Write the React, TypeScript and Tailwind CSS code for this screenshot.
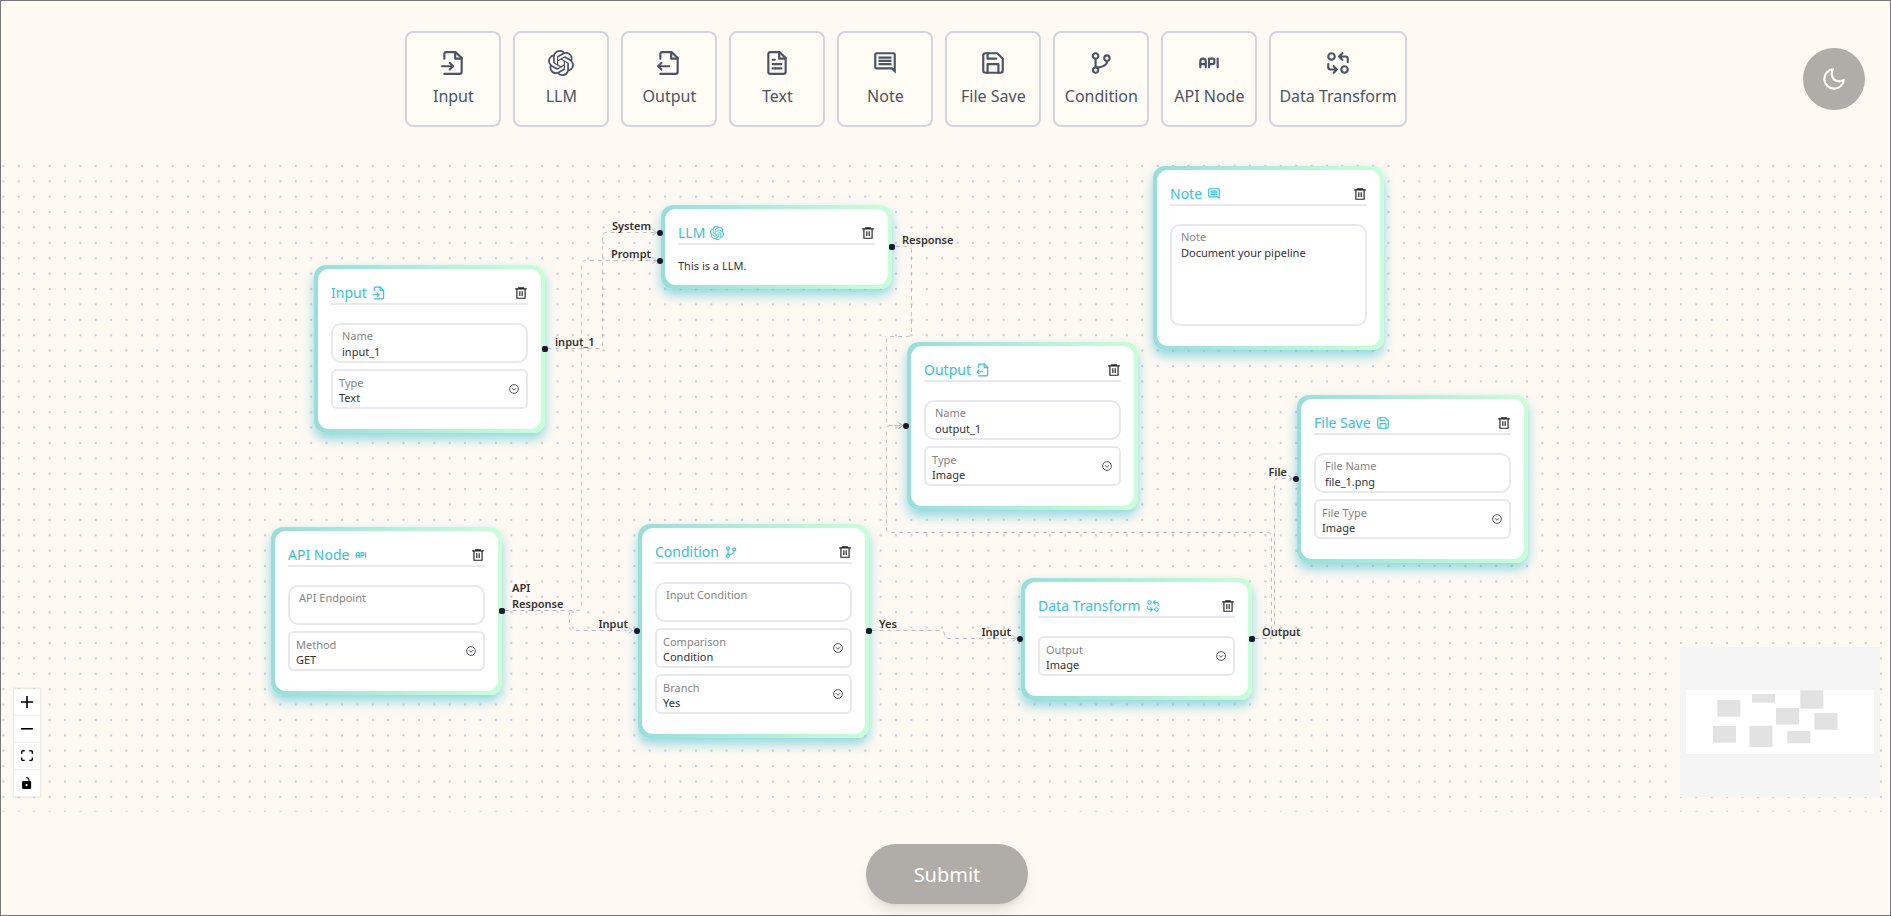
import { useId, type CSSProperties, type ReactNode } from 'react';
import { SiOpenai } from 'react-icons/si';
import { MdOutlineComment } from 'react-icons/md';
import { TbApi, TbTransform } from 'react-icons/tb';
import { BiGitBranch } from 'react-icons/bi';

type IconProps = { className?: string };

function Stroke({ className, children }: { className?: string; children: ReactNode }) {
  return (
    <svg
      viewBox="0 0 24 24"
      className={className}
      fill="none"
      stroke="currentColor"
      strokeWidth="2"
      strokeLinecap="round"
      strokeLinejoin="round"
      aria-hidden="true"
    >
      {children}
    </svg>
  );
}

const FileInputIcon = ({ className }: IconProps) => (
  <Stroke className={className}>
    <path d="M4 22h14a2 2 0 0 0 2-2V7.5L14.5 2H6a2 2 0 0 0-2 2v4" />
    <path d="M14 2v6h6" />
    <path d="M2 15h10" />
    <path d="m9 18 3-3-3-3" />
  </Stroke>
);

const FileOutputIcon = ({ className }: IconProps) => (
  <Stroke className={className}>
    <path d="M4 22h14a2 2 0 0 0 2-2V7.5L14.5 2H6a2 2 0 0 0-2 2v4" />
    <path d="M14 2v6h6" />
    <path d="M2 15h10" />
    <path d="m5 12-3 3 3 3" />
  </Stroke>
);

const FileTextIcon = ({ className }: IconProps) => (
  <Stroke className={className}>
    <path d="M14.5 2H6a2 2 0 0 0-2 2v16a2 2 0 0 0 2 2h12a2 2 0 0 0 2-2V7.5L14.5 2z" />
    <path d="M14 2v6h6" />
    <path d="M16 13H8M16 17H8M10 9H8" />
  </Stroke>
);

const SaveIcon = ({ className }: IconProps) => (
  <Stroke className={className}>
    <path d="M19 21H5a2 2 0 0 1-2-2V5a2 2 0 0 1 2-2h11l5 5v11a2 2 0 0 1-2 2z" />
    <path d="M17 21v-8H7v8" />
    <path d="M7 3v5h8" />
  </Stroke>
);

const TrashIcon = ({ className }: IconProps) => (
  <svg viewBox="0 0 24 24" className={className} fill="currentColor" aria-hidden="true">
    <path d="M17 4h5v2h-2v15a1 1 0 0 1-1 1H5a1 1 0 0 1-1-1V6H2V4h5V2h10v2zM6 6v14h12V6H6zm3 3h2v8H9V9zm4 0h2v8h-2V9z" />
  </svg>
);

const ChevronCircleIcon = ({ className }: IconProps) => (
  <svg viewBox="0 0 24 24" className={className} fill="none" stroke="currentColor" strokeWidth="2" aria-hidden="true">
    <circle cx="12" cy="12" r="10.5" />
    <path d="m7 10 5 5 5-5" />
  </svg>
);

const MoonIcon = ({ className }: IconProps) => (
  <Stroke className={className}>
    <path d="M21 12.8A9 9 0 1 1 11.200 3a7 7 0 0 0 9.800 9.800z" />
  </Stroke>
);

const tools = [
  { label: 'Input', Icon: FileInputIcon },
  { label: 'LLM', Icon: SiOpenai },
  { label: 'Output', Icon: FileOutputIcon },
  { label: 'Text', Icon: FileTextIcon },
  { label: 'Note', Icon: MdOutlineComment },
  { label: 'File Save', Icon: SaveIcon },
  { label: 'Condition', Icon: BiGitBranch },
  { label: 'API Node', Icon: TbApi },
  { label: 'Data Transform', Icon: TbTransform },
];

function TextField({ label, value }: { label: string; value: string }) {
  const id = useId();
  return (
    <div className="flex h-10 flex-col rounded-[10px] border-2 border-[#e8e8ee] bg-white px-[9px] pt-[3px]">
      <label htmlFor={id} className="text-[11px] leading-4 text-[#858585]">{label}</label>
      <input id={id} type="text" defaultValue={value} className="h-4 w-full bg-transparent text-[11px] leading-4 text-[#333] outline-none" />
    </div>
  );
}

function SelectField({ label, value }: { label: string; value: string }) {
  const id = useId();
  return (
    <div className="relative flex h-10 flex-col rounded-md border-2 border-[#e8e8ee] bg-white px-[6px] pt-1">
      <label htmlFor={id} className="text-[11px] leading-[15px] text-[#858585]">{label}</label>
      <select id={id} defaultValue={value} className="h-4 w-full appearance-none bg-transparent text-[11px] leading-4 text-[#333] outline-none">
        <option>{value}</option>
      </select>
      <ChevronCircleIcon className="pointer-events-none absolute top-[13px] right-[7px] size-[10px] text-[#333]" />
    </div>
  );
}

function NoteField() {
  const id = useId();
  return (
    <div className="flex h-[102px] flex-col rounded-[10px] border-2 border-[#e8e8ee] bg-white px-[9px] pt-[3px]">
      <label htmlFor={id} className="text-[11px] leading-4 text-[#858585]">Note</label>
      <textarea id={id} defaultValue="Document your pipeline" className="w-full flex-1 resize-none bg-transparent text-[11px] leading-4 text-[#333] outline-none" />
    </div>
  );
}

type Port = { side: 'in' | 'out'; y: number; label?: string };

type NodeSpec = {
  title: string;
  Icon: (props: IconProps) => ReactNode;
  x: number;
  y: number;
  ports: Port[];
  body: ReactNode;
};

const nodes: NodeSpec[] = [
  {
    title: 'Input', Icon: FileInputIcon, x: 313, y: 108,
    ports: [{ side: 'out', y: 84, label: 'input_1' }],
    body: <><TextField label="Name" value="input_1" /><SelectField label="Type" value="Text" /></>,
  },
  {
    title: 'LLM', Icon: SiOpenai, x: 660, y: 48,
    ports: [
      { side: 'in', y: 28, label: 'System' },
      { side: 'in', y: 56, label: 'Prompt' },
      { side: 'out', y: 42, label: 'Response' },
    ],
    body: <p className="-mt-[5px] -mb-[9px] text-[11px] leading-4 text-[#333]">This is a LLM.</p>,
  },
  {
    title: 'Note', Icon: MdOutlineComment, x: 1152, y: 9,
    ports: [],
    body: <NoteField />,
  },
  {
    title: 'Output', Icon: FileOutputIcon, x: 906, y: 185,
    ports: [{ side: 'in', y: 84 }],
    body: <><TextField label="Name" value="output_1" /><SelectField label="Type" value="Image" /></>,
  },
  {
    title: 'File Save', Icon: SaveIcon, x: 1296, y: 238,
    ports: [{ side: 'in', y: 84, label: 'File' }],
    body: <><TextField label="File Name" value="file_1.png" /><SelectField label="File Type" value="Image" /></>,
  },
  {
    title: 'API Node', Icon: TbApi, x: 270, y: 370,
    ports: [{ side: 'out', y: 84, label: 'API Response' }],
    body: <><TextField label="API Endpoint" value="" /><SelectField label="Method" value="GET" /></>,
  },
  {
    title: 'Condition', Icon: BiGitBranch, x: 637, y: 367,
    ports: [
      { side: 'in', y: 107, label: 'Input' },
      { side: 'out', y: 107, label: 'Yes' },
    ],
    body: (
      <>
        <TextField label="Input Condition" value="" />
        <SelectField label="Comparison" value="Condition" />
        <SelectField label="Branch" value="Yes" />
      </>
    ),
  },
  {
    title: 'Data Transform', Icon: TbTransform, x: 1020, y: 421,
    ports: [
      { side: 'in', y: 61, label: 'Input' },
      { side: 'out', y: 61, label: 'Output' },
    ],
    body: <SelectField label="Output" value="Image" />,
  },
];

function PortMark({ port }: { port: Port }) {
  const style: CSSProperties = { top: port.y };
  const isOut = port.side === 'out';
  return (
    <div
      style={style}
      className={isOut ? 'absolute left-full' : 'absolute left-0'}
    >
      <span
        className={
          isOut
            ? 'absolute -top-[3px] -left-[3px] size-[6px] rounded-[2px] bg-[#1a192b]'
            : 'absolute -top-[3px] -left-[4px] size-[6px] rounded-full bg-[#1a192b]'
        }
      />
      {port.label && (
        <span
          className={
            isOut
              ? 'absolute bottom-[-1px] left-[10px] w-[60px] text-[11px] leading-4 font-semibold text-[#333]'
              : 'absolute right-[10px] bottom-[-1px] text-right text-[11px] leading-4 font-semibold whitespace-nowrap text-[#333]'
          }
        >
          {port.label}
        </span>
      )}
    </div>
  );
}

function FlowNode({ node }: { node: NodeSpec }) {
  const { Icon } = node;
  return (
    <article
      style={{ left: node.x, top: node.y }}
      className="absolute w-[231px] rounded-xl bg-linear-to-r from-[#98ded9] to-[#c7ffd8] p-1 shadow-[0_6px_12px_rgba(30,184,206,0.5)]"
    >
      <div className="rounded-[11px] bg-white px-[13px] pt-[14px] pb-5">
        <header className="mb-[18px] flex items-center border-b-2 border-[#e8e8ee] text-[#35c4d4]">
          <h2 className="text-sm leading-5">{node.title}</h2>
          <Icon className="ml-[5px] size-[14px]" />
          <button type="button" aria-label={`Delete ${node.title}`} className="ml-auto text-[#222]">
            <TrashIcon className="size-[14px]" />
          </button>
        </header>
        <div className="flex flex-col gap-[6px]">{node.body}</div>
      </div>
      {node.ports.map((port) => (
        <PortMark key={`${port.side}${port.y}`} port={port} />
      ))}
    </article>
  );
}

type Point = [number, number];

const edges: Point[][] = [
  [[547, 192], [602, 192], [602, 76], [656, 76]],
  [[504, 454], [581, 454], [581, 104], [656, 104]],
  [[504, 454], [569, 454], [569, 474], [632, 474]],
  [[895, 90], [911, 90], [911, 180], [886, 180], [886, 269], [902, 269]],
  [[1254, 482], [1271, 482], [1271, 376], [886, 376], [886, 269], [902, 269]],
  [[1254, 482], [1274, 482], [1274, 322], [1292, 322]],
  [[871, 474], [944, 474], [944, 482], [1016, 482]],
];

const towards = (from: Point, to: Point, distance: number): Point => [
  from[0] + Math.sign(to[0] - from[0]) * distance,
  from[1] + Math.sign(to[1] - from[1]) * distance,
];

// Right-angled route whose corners are eased by a small curve.
function routePath(points: Point[]) {
  const parts = [`M${points[0].join(' ')}`];
  for (let i = 1; i < points.length - 1; i += 1) {
    const before = towards(points[i], points[i - 1], 4);
    const after = towards(points[i], points[i + 1], 4);
    parts.push(`L${before.join(' ')}Q${points[i].join(' ')} ${after.join(' ')}`);
  }
  parts.push(`L${points[points.length - 1].join(' ')}`);
  return parts.join('');
}

function Edges() {
  return (
    <svg className="absolute inset-0 size-full" aria-hidden="true">
      <defs>
        <pattern id="dots" x="-5.3" y="1.2" width="15.39" height="15.39" patternUnits="userSpaceOnUse">
          <circle cx="7.7" cy="7.7" r="1.15" fill="#cbcbd6" />
        </pattern>
      </defs>
      <rect width="100%" height="100%" fill="url(#dots)" />
      <g fill="none" stroke="#b1b1b7" transform="translate(-0.5 -0.5)">
        {edges.map((points, index) => {
          const [x, y] = points[points.length - 1];
          return (
            <g key={index}>
              <path d={routePath(points)} strokeWidth="0.8" strokeDasharray="4 4" />
              <path d={`M${x - 4} ${y - 3}L${x} ${y}L${x - 4} ${y + 3}`} strokeWidth="0.8" />
            </g>
          );
        })}
      </g>
    </svg>
  );
}

function ControlButton({ label, children }: { label: string; children: ReactNode }) {
  return (
    <button type="button" aria-label={label} className="flex h-[27px] w-[26px] items-center justify-center border-b border-[#eee] bg-white text-black">
      {children}
    </button>
  );
}

function Controls() {
  return (
    <div className="absolute bottom-[15px] left-[13px] flex flex-col shadow-[0_0_2px_1px_rgba(0,0,0,0.08)]">
      <ControlButton label="Zoom in">
        <svg viewBox="0 0 32 32" className="size-3" fill="currentColor"><path d="M32 18.133H18.133V32h-4.266V18.133H0v-4.266h13.867V0h4.266v13.867H32z" /></svg>
      </ControlButton>
      <ControlButton label="Zoom out">
        <svg viewBox="0 0 32 5" className="w-3" fill="currentColor"><path d="M0 0h32v4.2H0z" /></svg>
      </ControlButton>
      <ControlButton label="Fit view">
        <svg viewBox="0 0 32 30" className="w-3" fill="currentColor"><path d="M3.692 4.63c0-.53.4-.938.939-.938h5.215V0H4.708C2.13 0 0 2.054 0 4.63v5.216h3.692V4.631zM27.354 0h-5.2v3.692h5.17c.53 0 .984.4.984.939v5.215H32V4.631A4.624 4.624 0 0027.354 0zm.954 24.83c0 .532-.4.94-.939.94h-5.215v3.768h5.215c2.577 0 4.631-2.13 4.631-4.707v-5.139h-3.692v5.139zm-23.677.94a.919.919 0 01-.939-.94v-5.138H0v5.139c0 2.577 2.13 4.707 4.708 4.707h5.138V25.77H4.631z" /></svg>
      </ControlButton>
      <ControlButton label="Toggle interactivity">
        <svg viewBox="0 0 25 32" className="h-3" fill="currentColor"><path d="M21.333 10.667H19.81V7.619C19.81 3.429 16.38 0 12.19 0c-4.114 1.828-1.37 2.133.305 2.438 1.676.305 4.42 2.59 4.42 5.181v3.048H3.047A3.056 3.056 0 000 13.714v15.238A3.056 3.056 0 003.048 32h18.285a3.056 3.056 0 003.048-3.048V13.714a3.056 3.056 0 00-3.048-3.047zM12.19 24.533a3.056 3.056 0 01-3.047-3.047 3.056 3.056 0 013.047-3.048 3.056 3.056 0 013.048 3.048 3.056 3.056 0 01-3.048 3.047z" /></svg>
      </ControlButton>
    </div>
  );
}

function MiniMap() {
  return (
    <svg viewBox="0 0 200 150" className="absolute right-[10px] bottom-[15px] h-[150px] w-[200px]" role="img" aria-label="Mini map">
      <rect width="200" height="150" fill="#f5f5f5" />
      <rect x="6" y="43" width="188" height="64" fill="#fff" />
      <g fill="#e2e2e2">
        <rect x="37.3" y="53" width="23" height="16.7" />
        <rect x="72" y="47" width="23" height="8.7" />
        <rect x="120.3" y="43.3" width="23" height="18.3" />
        <rect x="96" y="61" width="23" height="16.5" />
        <rect x="134.4" y="66" width="23" height="16.7" />
        <rect x="33" y="79" width="23" height="16.7" />
        <rect x="69.4" y="78.7" width="23" height="21.2" />
        <rect x="107.3" y="84" width="23" height="12.2" />
      </g>
    </svg>
  );
}

export default function App() {
  return (
    <div className="flex min-h-screen flex-col border border-[#777] bg-[#fff9f3] font-['Noto_Sans',sans-serif]">
      <header className="flex items-center pt-[30px] pr-[25px] pb-[30px] pl-2">
        <nav aria-label="Node palette" className="flex flex-1 justify-center gap-3">
          {tools.map(({ label, Icon }) => (
            <button
              key={label}
              type="button"
              className="flex h-24 min-w-24 flex-col items-center rounded-lg border-2 border-gray-300 bg-[#fffcf5] px-2 pt-[17px] text-gray-600"
            >
              <Icon className="size-[26px]" />
              <span className="mt-2 text-base leading-6">{label}</span>
            </button>
          ))}
        </nav>
        <button type="button" aria-label="Dark mode" className="flex size-[62px] items-center justify-center rounded-full bg-[#b0ada8] text-white">
          <MoonIcon className="size-[26px]" />
        </button>
      </header>

      <main className="relative flex-1 overflow-hidden">
        <Edges />
        {nodes.map((node) => (
          <FlowNode key={node.title} node={node} />
        ))}
        <Controls />
        <MiniMap />
      </main>

      <footer className="flex justify-center pt-8 pb-[11px] pl-[3px]">
        <button type="submit" className="h-[60px] rounded-full bg-[#b0ada8] px-12 pt-[2px] text-xl text-white shadow-lg">
          Submit
        </button>
      </footer>
    </div>
  );
}
